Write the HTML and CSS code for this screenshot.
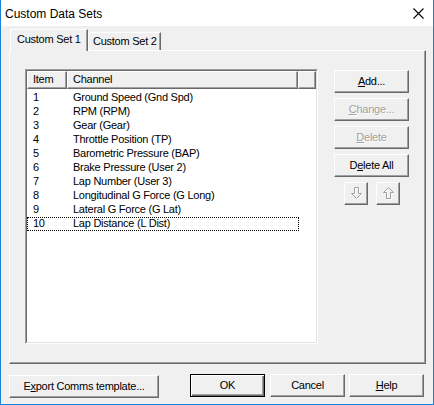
FILE: index.html
```html
<!DOCTYPE html>
<html>
<head>
<meta charset="utf-8">
<link rel="stylesheet" href="styles.css">
</head>
<body>
<div class="window">
  <div class="titlebar">
    <span class="title">Custom Data Sets</span>
    <svg class="close" width="11" height="11" viewBox="0 0 11 11"><path d="M0.5 0.5 L10.5 10.5 M10.5 0.5 L0.5 10.5" stroke="#000" stroke-width="1.1" fill="none"/></svg>
  </div>
  <div class="client">
    <div class="tabs">
      <div class="tab active">Custom Set 1</div>
      <div class="tab">Custom Set 2</div>
    </div>
    <div class="panel">
      <div class="listbox">
        <div class="listinner">
          <div class="header">
            <div class="hcell c-item">Item</div>
            <div class="hcell c-chan">Channel</div>
            <div class="hcell c-rest"></div>
          </div>
          <div class="rows">
            <div class="row"><span class="c-item">1</span><span>Ground Speed (Gnd Spd)</span></div>
            <div class="row"><span class="c-item">2</span><span>RPM (RPM)</span></div>
            <div class="row"><span class="c-item">3</span><span>Gear (Gear)</span></div>
            <div class="row"><span class="c-item">4</span><span>Throttle Position (TP)</span></div>
            <div class="row"><span class="c-item">5</span><span>Barometric Pressure (BAP)</span></div>
            <div class="row"><span class="c-item">6</span><span>Brake Pressure (User 2)</span></div>
            <div class="row"><span class="c-item">7</span><span>Lap Number (User 3)</span></div>
            <div class="row"><span class="c-item">8</span><span>Longitudinal G Force (G Long)</span></div>
            <div class="row"><span class="c-item">9</span><span>Lateral G Force (G Lat)</span></div>
            <div class="row focus"><span class="c-item">10</span><span>Lap Distance (L Dist)</span></div>
          </div>
        </div>
      </div>
      <div class="side">
        <div class="btn"><u>A</u>dd...</div>
        <div class="btn disabled"><u>C</u>hange...</div>
        <div class="btn disabled"><u>D</u>elete</div>
        <div class="btn">D<u>e</u>lete All</div>
        <div class="arrows">
          <div class="btn arrow">
            <svg width="13" height="15" viewBox="0 0 13 15"><polygon points="4.5,1.5 8.5,1.5 8.5,7.5 11.5,7.5 6.5,12.5 1.5,7.5 4.5,7.5" fill="none" stroke="#a0a0a0" stroke-width="1"/></svg>
          </div>
          <div class="btn arrow">
            <svg width="13" height="15" viewBox="0 0 13 15"><polygon points="4.5,12.5 8.5,12.5 8.5,6.5 11.5,6.5 6.5,1.5 1.5,6.5 4.5,6.5" fill="none" stroke="#a0a0a0" stroke-width="1"/></svg>
          </div>
        </div>
      </div>
    </div>
    <div class="bottom">
      <div class="btn export">E<u>x</u>port Comms template...</div>
      <div class="btn default ok">OK</div>
      <div class="btn cancel">Cancel</div>
      <div class="btn help"><u>H</u>elp</div>
    </div>
  </div>
</div>
</body>
</html>
```

FILE: styles.css
```css
* { box-sizing: border-box; }
html, body { margin: 0; padding: 0; background: #fff; }
body { font-family: "Liberation Sans", Arial, sans-serif; font-size: 11px; letter-spacing: -0.25px; color: #000; }

.window {
  width: 434px;
  height: 405px;
  border: 1px solid #1883d7;
  border-top: none;
  display: flex;
  flex-direction: column;
}

.titlebar {
  height: 26px;
  background: #fff;
  display: flex;
  align-items: center;
  justify-content: space-between;
  padding: 0 9px 0 4px;
}
.title {
  font-family: "Liberation Sans", Arial, sans-serif;
  font-size: 12px;
  letter-spacing: 0;
  padding-top: 1px;
}
.close { display: block; margin-top: 1px; }

.client {
  flex: 1;
  background: #f0f0f0;
  padding: 4px 7px 0 8px;
  display: flex;
  flex-direction: column;
}

.tabs {
  height: 20px;
  display: flex;
  align-items: flex-end;
  position: relative;
  z-index: 1;
}
.tab {
  height: 18px;
  width: 73px;
  border-top: 1px solid #fff;
  border-left: 1px solid #fff;
  border-right: 1px solid #696969;
  box-shadow: inset -1px 0 0 #a0a0a0;
  background: #f0f0f0;
  padding-left: 4px;
  line-height: 17px;
  white-space: nowrap;
}
.tab.active {
  height: 22px;
  width: 78px;
  margin-left: 1px;
  margin-bottom: -1px;
  padding-left: 6px;
  line-height: 19px;
}

.panel {
  height: 314px;
  width: 417px;
  border: 1px solid;
  border-color: #fff #696969 #696969 #fff;
  box-shadow: inset -1px -1px 0 #a0a0a0;
  display: flex;
  padding: 18px 0 0 15px;
}

.listbox {
  width: 293px;
  height: 275px;
  border: 1px solid;
  border-color: #a0a0a0 #fff #fff #a0a0a0;
}
.listinner {
  height: 100%;
  border: 1px solid;
  border-color: #696969 #e3e3e3 #e3e3e3 #696969;
  background: #fff;
  overflow: hidden;
}

.header {
  display: flex;
  height: 18px;
}
.hcell {
  height: 18px;
  border: 1px solid;
  border-color: #fff #696969 #696969 #fff;
  box-shadow: inset -1px -1px 0 #a0a0a0;
  background: #f0f0f0;
  padding-left: 5px;
  line-height: 15px;
}
.hcell.c-item { width: 40px; }
.hcell.c-chan { width: 231px; }
.hcell.c-rest { flex: 1; }

.rows { padding-top: 2px; }
.row {
  display: flex;
  height: 14px;
  line-height: 13px;
  width: 272px;
  white-space: nowrap;
}
.row .c-item { width: 40px; padding-left: 6px; }
.row span:last-child { padding-left: 6px; }
.row.focus { outline: 1px dotted #000; outline-offset: -1px; }

.side {
  margin-left: 16px;
  padding-top: 1px;
  display: flex;
  flex-direction: column;
  gap: 5px;
}

.btn {
  width: 75px;
  height: 23px;
  border: 1px solid;
  border-color: #fff #696969 #696969 #fff;
  box-shadow: inset -1px -1px 0 #a0a0a0;
  background: #f0f0f0;
  display: flex;
  align-items: center;
  justify-content: center;
  white-space: nowrap;
  padding-bottom: 1px;
}
.btn.disabled { color: #a0a0a0; text-shadow: 1px 1px 0 #fff; }
.btn u { text-underline-offset: 1px; }

.arrows {
  display: flex;
  gap: 8px;
  padding-left: 10px;
}
.btn.arrow { width: 24px; height: 23px; padding: 0; }
.btn.arrow svg { display: block; filter: drop-shadow(1px 1px 0 #fff); }

.bottom {
  display: flex;
  margin-top: 10px;
  align-items: flex-start;
}
.btn.export { width: 150px; margin-top: 1px; }
.btn.ok { margin-left: 31px; }
.btn.cancel { margin-left: 5px; }
.btn.help { margin-left: 4px; }
.btn.default {
  border: 1px solid #000;
  box-shadow: inset 1px 1px 0 #fff, inset -1px -1px 0 #696969, inset -2px -2px 0 #a0a0a0;
}
```
